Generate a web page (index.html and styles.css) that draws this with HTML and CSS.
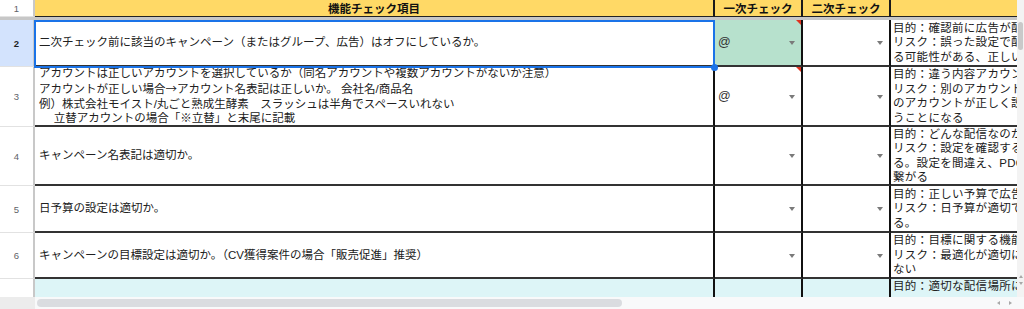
FILE: index.html
```html
<!DOCTYPE html>
<html lang="ja">
<head>
<meta charset="utf-8">
<title>チェックシート</title>
<link rel="stylesheet" href="styles.css">
</head>
<body>
<div class="app">
  <div class="main">
    <div class="viewport">
      <div class="sheet">
        <!-- row 1 -->
        <div class="rh">1</div>
        <div class="hd">機能チェック項目</div>
        <div class="hd">一次チェック</div>
        <div class="hd">二次チェック</div>
        <div class="hd"></div>
        <div class="divider"></div>

        <!-- row 2 -->
        <div class="rh sel">2</div>
        <div class="c txt active">二次チェック前に該当のキャンペーン（またはグループ、広告）はオフにしているか。</div>
        <div class="c chk done noted"><span class="val">@</span><span class="arrow"></span></div>
        <div class="c chk"><span class="val"></span><span class="arrow"></span></div>
        <div class="c note"><div class="lines">目的：確認前に広告が配信されるのを防ぐ<br>リスク：誤った設定で配信され<br>る可能性がある、正しい設定で</div></div>

        <!-- row 3 -->
        <div class="rh">3</div>
        <div class="c txt"><div class="lines">アカウントは正しいアカウントを選択しているか（同名アカウントや複数アカウントがないか注意）<br>アカウントが正しい場合<span class="cjk">→</span>アカウント名表記は正しいか。 会社名/商品名<br>例）株式会社モイスト/丸ごと熟成生酵素　スラッシュは半角でスペースいれない<br>　 立替アカウントの場合「※立替」と末尾に記載</div></div>
        <div class="c chk noted"><span class="val">@</span><span class="arrow"></span></div>
        <div class="c chk"><span class="val"></span><span class="arrow"></span></div>
        <div class="c note"><div class="lines">目的：違う内容アカウントでの配信防止<br>リスク：別のアカウントで配信し、別<br>のアカウントが正しく設定されてしま<br>うことになる</div></div>

        <!-- row 4 -->
        <div class="rh">4</div>
        <div class="c txt">キャンペーン名表記は適切か。</div>
        <div class="c chk"><span class="val"></span><span class="arrow"></span></div>
        <div class="c chk"><span class="val"></span><span class="arrow"></span></div>
        <div class="c note"><div class="lines">目的：どんな配信なのかを明確にする<br>リスク：設定を確認することができなくな<br>る。設定を間違え、PDCAの遅れに<br>繋がる</div></div>

        <!-- row 5 -->
        <div class="rh">5</div>
        <div class="c txt">日予算の設定は適切か。</div>
        <div class="c chk"><span class="val"></span><span class="arrow"></span></div>
        <div class="c chk"><span class="val"></span><span class="arrow"></span></div>
        <div class="c note"><div class="lines">目的：正しい予算で広告を配信する<br>リスク：日予算が適切でないと予算超過にな<br>る。</div></div>

        <!-- row 6 -->
        <div class="rh">6</div>
        <div class="c txt">キャンペーンの目標設定は適切か。（CV獲得案件の場合「販売促進」推奨）</div>
        <div class="c chk"><span class="val"></span><span class="arrow"></span></div>
        <div class="c chk"><span class="val"></span><span class="arrow"></span></div>
        <div class="c note"><div class="lines">目的：目標に関する機能を使用する<br>リスク：最適化が適切に行われ<br>ない</div></div>

        <!-- row 7 -->
        <div class="rh last">7</div>
        <div class="c txt cyan top"></div>
        <div class="c chk cyan top"></div>
        <div class="c chk cyan top"></div>
        <div class="c note cyan top"><div class="lines">目的：適切な配信場所に配信する</div></div>
      </div>
    </div>
    <div class="vscroll">
      <div class="vthumb"></div>
      <div class="vspace"></div>
      <span class="tri up"></span>
      <span class="tri down"></span>
    </div>
  </div>
  <div class="hscroll">
    <div class="corner"></div>
    <div class="hthumb"></div>
    <div class="hspace"></div>
    <span class="tri left"></span>
    <span class="tri right"></span>
  </div>
</div>
</body>
</html>
```

FILE: styles.css
```css
html, body {
  margin: 0;
  padding: 0;
  background: #ffffff;
}

.app {
  width: 1024px;
  height: 309px;
  overflow: hidden;
  font-family: "Liberation Sans", "Noto Sans CJK JP", sans-serif;
  color: #1f1f1f;
}

.main {
  display: flex;
  height: 297px;
}

.viewport {
  width: 1017px;
  height: 297px;
  flex: none;
  overflow: hidden;
}

.sheet {
  display: grid;
  grid-template-columns: 35px 680px 88px 88px 200px;
  grid-template-rows: 17px 3px 47px 60px 59px 47px 46px 47px;
  width: max-content;
}

.rh {
  box-sizing: border-box;
  border-right: 2px solid #c8c8c8;
  border-bottom: 1px solid #e2e2e2;
  background: #ffffff;
  color: #5f6368;
  font-size: 9.5px;
  display: flex;
  align-items: center;
  justify-content: center;
}

.rh.sel {
  background: #d3e3fd;
  color: #1f1f1f;
  font-weight: bold;
}

.rh.last {
  border-bottom: none;
}

.hd {
  box-sizing: border-box;
  background: #ffd966;
  border-right: 2px solid #1a1a1a;
  border-bottom: 1px solid #222;
  font-size: 11.5px;
  font-weight: bold;
  color: #111;
  display: flex;
  align-items: center;
  justify-content: center;
}

.divider {
  grid-column: 1 / -1;
  background: #c7c7c7;
}

.c {
  box-sizing: border-box;
  border-right: 2px solid #111;
  border-bottom: 2px solid #333;
  display: flex;
  align-items: center;
  overflow: hidden;
  font-size: 11.5px;
  line-height: 14.6px;
  color: #202020;
  padding: 0 3px;
  white-space: nowrap;
}

.c.top {
  align-items: flex-start;
  border-bottom: none;
}

.cjk {
  font-family: "Noto Sans CJK JP", sans-serif;
}

.cyan {
  background: #ddf5f7;
}

.txt {
  padding-left: 4px;
}

.active {
  position: relative;
  z-index: 2;
  overflow: visible;
}

.active::after {
  content: "";
  position: absolute;
  top: 0;
  left: -1px;
  right: -2px;
  bottom: -3px;
  border: 2px solid #1a73e8;
  pointer-events: none;
}

.active::before {
  content: "";
  position: absolute;
  width: 7px;
  height: 7px;
  border-radius: 50%;
  background: #1a73e8;
  right: -4.5px;
  bottom: -5.5px;
  z-index: 3;
}

.chk {
  justify-content: space-between;
  padding-left: 3px;
  padding-right: 6px;
}

.chk .val {
  font-size: 12.5px;
  color: #333;
}

.done {
  background: #b7e1cd;
}

.noted {
  position: relative;
}

.noted::after {
  content: "";
  position: absolute;
  top: 0;
  right: 0;
  border-top: 5px solid #e0321f;
  border-left: 5px solid transparent;
}

.arrow {
  width: 0;
  height: 0;
  border-left: 3.5px solid transparent;
  border-right: 3.5px solid transparent;
  border-top: 4px solid #7a7a7a;
  margin-top: 1px;
}

.note {
  padding-left: 2px;
  letter-spacing: 0.3px;
  line-height: 14.5px;
}

.lines {
  white-space: nowrap;
}

.vscroll {
  flex: none;
  width: 7px;
  background: #f3f3f3;
  display: flex;
  flex-direction: column;
  align-items: center;
  padding-top: 22px;
  padding-bottom: 12px;
  box-sizing: border-box;
}

.vthumb {
  width: 5px;
  height: 28px;
  border-radius: 3px;
  background: #c9c9c9;
}

.vspace {
  flex: 1;
}

.tri {
  width: 0;
  height: 0;
  display: block;
}

.tri.up {
  border-left: 2px solid transparent;
  border-right: 2px solid transparent;
  border-bottom: 3px solid #a8a8a8;
  margin-bottom: 4px;
}

.tri.down {
  border-left: 2px solid transparent;
  border-right: 2px solid transparent;
  border-top: 3px solid #a8a8a8;
}

.hscroll {
  display: flex;
  align-items: center;
  height: 12px;
  background: #f8f9fa;
}

.corner {
  width: 35px;
  height: 12px;
  background: #ececec;
  flex: none;
}

.hthumb {
  width: 585px;
  height: 8px;
  margin-left: 2px;
  border-radius: 4px;
  background: #dadce0;
  flex: none;
}

.hspace {
  flex: 1;
}

.tri.left {
  border-top: 2px solid transparent;
  border-bottom: 2px solid transparent;
  border-right: 3px solid #a8a8a8;
  margin-right: 9px;
}

.tri.right {
  border-top: 2px solid transparent;
  border-bottom: 2px solid transparent;
  border-left: 3px solid #a8a8a8;
  margin-right: 12px;
}
```
